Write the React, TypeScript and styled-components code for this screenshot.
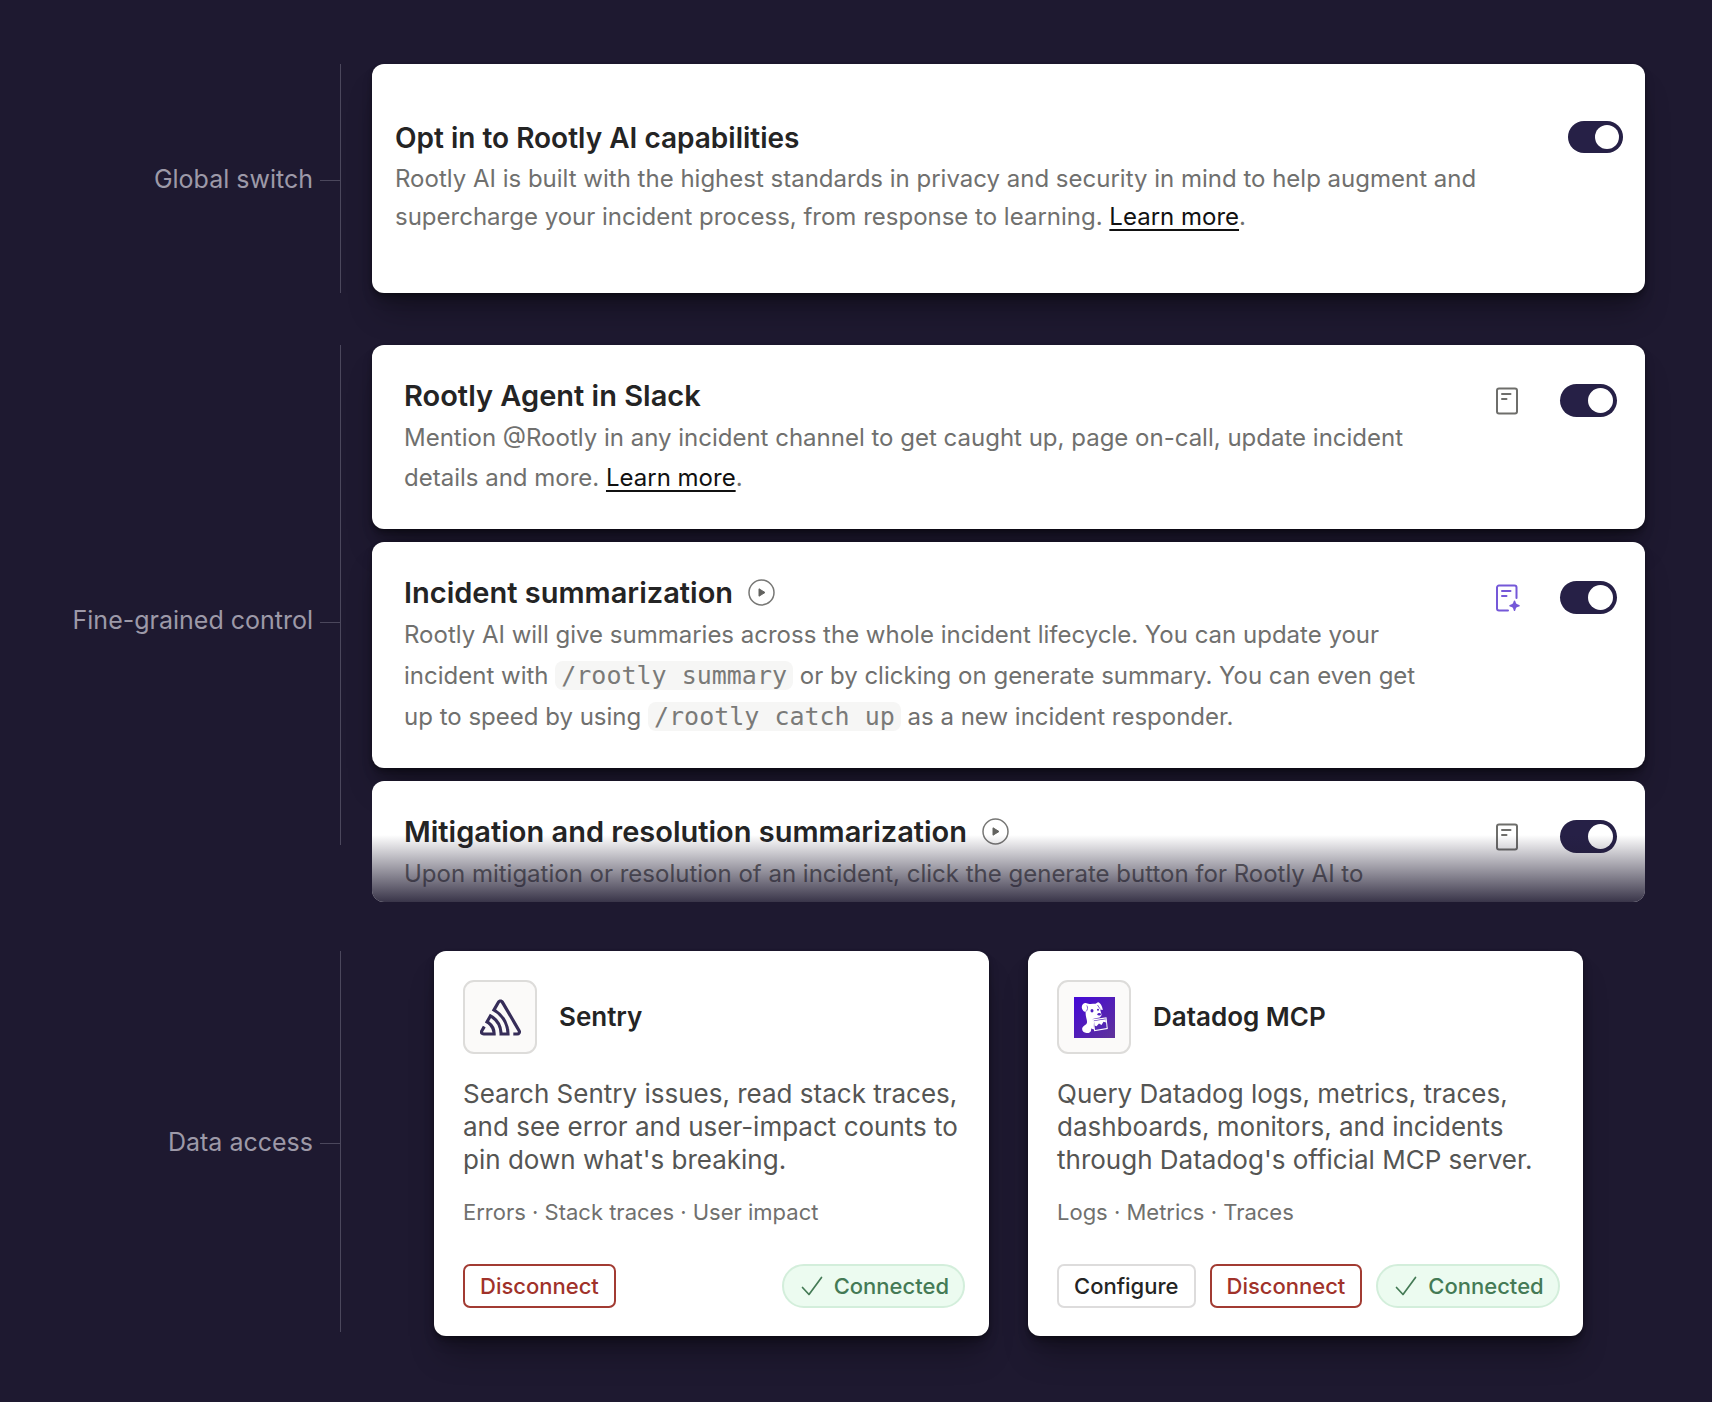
import React from 'react';
import styled, { createGlobalStyle, css } from 'styled-components';
import { SiSentry } from 'react-icons/si';

const GlobalStyle = createGlobalStyle`
  *, *::before, *::after { box-sizing: border-box; }
  body {
    margin: 0;
    background: #1e1930;
    font-family: Inter, 'Liberation Sans', sans-serif;
    color: #242424;
  }
  h2, h3, p { margin: 0; }
  button { font-family: inherit; cursor: pointer; }
`;

const Page = styled.main`
  display: flex;
  flex-direction: column;
  padding: 64px 67px 66px 0;
`;

const Section = styled.section<{ $gap?: number }>`
  display: grid;
  grid-template-columns: 341px minmax(0, 1fr);
  column-gap: 31px;
  margin-bottom: ${(p) => p.$gap ?? 0}px;
`;

const Rail = styled.div<{ $trim?: number; $cut?: number }>`
  display: flex;
  align-items: center;
  justify-content: flex-end;
  margin-bottom: ${(p) => p.$trim ?? 0}px;
  padding-right: 1px;
  background: linear-gradient(#4b475c, #4b475c) right top / 1px calc(100% - ${(p) => p.$cut ?? 0}px) no-repeat;
`;

const RailLabel = styled.h2`
  font-size: 25px;
  line-height: 32px;
  font-weight: 400;
  color: #9d99a8;
  &::after {
    content: '';
    display: inline-block;
    vertical-align: middle;
    width: 20px;
    height: 1px;
    margin-left: 7px;
    background: #4b475c;
  }
`;

const shadow = css`
  box-shadow: 0 2px 4px rgba(0, 0, 0, 0.3), 0 8px 12px -2px rgba(0, 0, 0, 0.25),
    0 24px 32px -8px rgba(0, 0, 0, 0.3);
`;

const Stack = styled.div`
  display: flex;
  flex-direction: column;
  gap: 13px;
`;

const Setting = styled.article<{ $hero?: boolean; $faded?: boolean }>`
  position: relative;
  display: flex;
  align-items: flex-start;
  padding: ${(p) => (p.$hero ? '53px 22px 57px 23px' : p.$faded ? '30px 28px 8px 32px' : '30px 28px 31px 32px')};
  border-radius: 12px;
  background: #fff;
  ${(p) => !p.$faded && shadow}
  ${(p) =>
    p.$faded &&
    css`
      overflow: hidden;
      &::after {
        content: '';
        position: absolute;
        inset: 54px 0 0;
        background: linear-gradient(rgba(30, 25, 48, 0), rgba(30, 25, 48, 0.88));
        pointer-events: none;
      }
    `}
`;

const Copy = styled.div<{ $hero?: boolean }>`
  flex: 1;
  max-width: ${(p) => (p.$hero ? 1090 : 1040)}px;
`;

const TitleRow = styled.div`
  display: flex;
  align-items: center;
  gap: 15px;
  height: 41px;
  margin-bottom: 2px;
`;

const Title = styled.h3<{ $hero?: boolean }>`
  font-size: ${(p) => (p.$hero ? 28 : 29)}px;
  line-height: 40px;
  font-weight: 600;
`;

const Body = styled.p<{ $hero?: boolean }>`
  font-size: 24px;
  line-height: ${(p) => (p.$hero ? 38 : 40)}px;
  color: #70706e;
`;

const TextLink = styled.a`
  color: #111;
  text-decoration: underline;
  text-decoration-thickness: 2px;
  text-underline-offset: 4px;
`;

const Code = styled.code`
  padding: 0 6px;
  border-radius: 8px;
  background: #f6f6f5;
  font-family: 'DejaVu Sans Mono', monospace;
  font-size: 25px;
  line-height: 41px;
  color: #7a7a78;
`;

const Controls = styled.div<{ $hero?: boolean }>`
  display: flex;
  align-items: center;
  gap: 40px;
  margin-left: auto;
  padding-top: ${(p) => (p.$hero ? 4 : 9)}px;
`;

const IconButton = styled.button`
  display: grid;
  place-items: center;
  padding: 0;
  border: 0;
  background: none;
`;

const Toggle = styled.input<{ $hero?: boolean }>`
  appearance: none;
  display: flex;
  align-items: center;
  justify-content: flex-end;
  width: ${(p) => (p.$hero ? 55 : 57)}px;
  height: ${(p) => (p.$hero ? 32 : 33)}px;
  margin: 0;
  padding: 4px;
  border-radius: 17px;
  background: #262046;
  cursor: pointer;
  &::before {
    content: '';
    height: 100%;
    aspect-ratio: 1;
    border-radius: 50%;
    background: #fff;
  }
  &:not(:checked) {
    justify-content: flex-start;
    background: #b9b7c4;
  }
`;

const Integrations = styled.div`
  display: grid;
  grid-template-columns: repeat(2, minmax(0, 1fr));
  gap: 39px;
  padding: 0 62px;
`;

const Card = styled.article`
  display: flex;
  flex-direction: column;
  padding: 29px 24px 28px 29px;
  border-radius: 12px;
  background: #fff;
  ${shadow}
`;

const CardHead = styled.header`
  display: flex;
  align-items: center;
  gap: 22px;
`;

const Logo = styled.div`
  display: grid;
  place-items: center;
  width: 74px;
  height: 74px;
  border: 2px solid #dddcda;
  border-radius: 11px;
  background: #fbfaf9;
  color: #362d59;
`;

const CardTitle = styled.h3`
  font-size: 26px;
  line-height: 32px;
  font-weight: 600;
`;

const CardText = styled.p`
  margin-top: 23px;
  font-size: 26px;
  line-height: 33px;
  color: #555553;
`;

const Meta = styled.p`
  margin-top: 20px;
  font-size: 22px;
  line-height: 32px;
  color: #70706e;
`;

const Actions = styled.footer`
  display: flex;
  align-items: center;
  gap: 14px;
  margin-top: 36px;
`;

const Button = styled.button<{ $danger?: boolean }>`
  height: 44px;
  padding: 0 15px;
  border: 2px solid ${(p) => (p.$danger ? '#a23b32' : '#dddcdc')};
  border-radius: 7px;
  background: #fff;
  font-size: 22px;
  font-weight: 500;
  white-space: nowrap;
  color: ${(p) => (p.$danger ? '#a0322a' : '#242424')};
`;

const Status = styled.span`
  display: flex;
  align-items: center;
  gap: 11px;
  height: 44px;
  margin-left: auto;
  padding: 0 14px 0 17px;
  border: 2px solid #d3eedb;
  border-radius: 22px;
  background: #ecfbf0;
  font-size: 22px;
  font-weight: 500;
  color: #447a55;
`;

const DocIcon = () => (
  <svg width="26" height="28" viewBox="0 0 26 28" fill="none" stroke="#6e6e6b" strokeWidth="2" strokeLinecap="round">
    <rect x="3" y="1.5" width="20" height="25" rx="2" />
    <path d="M8 7h8.5M8 12h4.5" />
  </svg>
);

const DocSparkIcon = () => (
  <svg width="26" height="28" viewBox="0 0 26 28" fill="none" stroke="#7558d8" strokeWidth="2" strokeLinecap="round">
    <path d="M22.500 14V3.500a2 2 0 0 0-2-2H5a2 2 0 0 0-2 2v21a2 2 0 0 0 2 2h9M8 7h8.500M8 12h4.500" />
    <path
      d="M20.500 17.200c.9 3.200 1.300 3.600 4.500 4.500c-3.200.9-3.600 1.300-4.500 4.500c-.9-3.200-1.300-3.600-4.500-4.500c3.200-.9 3.600-1.300 4.500-4.500z"
      fill="#7558d8"
      strokeWidth="1.500"
      strokeLinejoin="round"
    />
  </svg>
);

const PlayIcon = () => (
  <svg width="27" height="27" viewBox="0 0 27 27">
    <circle cx="13.500" cy="13.500" r="12.500" fill="none" stroke="#777775" strokeWidth="1.500" />
    <path d="M11 9.800v7.400l6-3.700z" fill="#62625f" stroke="#62625f" strokeLinejoin="round" />
  </svg>
);

const CheckIcon = () => (
  <svg width="22" height="20" viewBox="0 0 22 20" fill="none" stroke="#447a55" strokeWidth="1.700" strokeLinecap="round" strokeLinejoin="round">
    <path d="M1.500 11.500l6.500 7L20.500 1.500" />
  </svg>
);

const DatadogLogo = () => (
  <svg width="41" height="41" viewBox="0 0 41 41">
    <defs>
      <linearGradient id="datadog-tile" x1="0" y1="0" x2="1" y2="1">
        <stop offset="0" stopColor="#4408d8" />
        <stop offset="1" stopColor="#5f3399" />
      </linearGradient>
    </defs>
    <rect width="41" height="41" fill="url(#datadog-tile)" />
    <g fill="#fff">
      <path d="M12.500 6.200C14.500 7.300 18 6.800 21.500 6.800L24 5.200C26.500 5.800 28.500 9.500 28.800 13L26.200 12.500L27.500 17.500C27.800 19.500 25.500 21 23 21L18.800 22L20.200 32.500L17 31.500C17.800 34.500 15.500 36.200 12.500 36C9.500 35.800 7.500 33.500 8.300 31C9 28.500 12.500 28.300 13 25.500C13.300 22.500 11.500 20.500 11.600 14.800C9.500 14.800 7.800 12.500 7.800 10C7.800 7.500 10 5.500 12.500 6.200Z" />
      <path d="M18.500 22.200L32.500 20.200L33.800 32L20.200 34.200Z" />
    </g>
    <path d="M19.800 23.400L31.600 21.600L32.700 31L21 33Z" fill="#5326b4" />
    <path d="M20 24L31.700 22.200L32 25.500L29.500 24.800L27.500 28L25 26.500L22.500 29.200L20.500 28.500Z" fill="#fff" />
    <path d="M12.800 8.500C14 10 13.800 13 12 14.500M23.500 8L26 11.800" fill="none" stroke="#4f1fc0" strokeWidth=".7" />
    <ellipse cx="18" cy="13.800" rx="1.500" ry="1.800" fill="#4f1fc0" />
    <circle cx="24" cy="12.700" r="1" fill="#4f1fc0" />
    <ellipse cx="25.200" cy="17.200" rx="1.800" ry="1.200" fill="#4f1fc0" />
  </svg>
);

type SettingCardProps = {
  id: string;
  title: string;
  hero?: boolean;
  faded?: boolean;
  play?: boolean;
  doc?: 'plain' | 'spark';
  children: React.ReactNode;
};

function SettingCard({ id, title, hero, faded, play, doc, children }: SettingCardProps) {
  return (
    <Setting $hero={hero} $faded={faded}>
      <Copy $hero={hero}>
        <TitleRow>
          <Title $hero={hero}>
            <label htmlFor={id}>{title}</label>
          </Title>
          {play && (
            <IconButton type="button" aria-label="Play demo">
              <PlayIcon />
            </IconButton>
          )}
        </TitleRow>
        <Body $hero={hero}>{children}</Body>
      </Copy>
      <Controls $hero={hero}>
        {doc && (
          <IconButton type="button" aria-label="Prompt">
            {doc === 'spark' ? <DocSparkIcon /> : <DocIcon />}
          </IconButton>
        )}
        <Toggle $hero={hero} id={id} type="checkbox" role="switch" defaultChecked />
      </Controls>
    </Setting>
  );
}

type IntegrationProps = {
  name: string;
  logo: React.ReactNode;
  text: string;
  meta: string;
  configurable?: boolean;
};

function Integration({ name, logo, text, meta, configurable }: IntegrationProps) {
  return (
    <Card>
      <CardHead>
        <Logo>{logo}</Logo>
        <CardTitle>{name}</CardTitle>
      </CardHead>
      <CardText>{text}</CardText>
      <Meta>{meta}</Meta>
      <Actions>
        {configurable && <Button type="button">Configure</Button>}
        <Button type="button" $danger>
          Disconnect
        </Button>
        <Status>
          <CheckIcon />
          Connected
        </Status>
      </Actions>
    </Card>
  );
}

export default function App() {
  return (
    <>
      <GlobalStyle />
      <Page>
        <Section $gap={52}>
          <Rail>
            <RailLabel>Global switch</RailLabel>
          </Rail>
          <SettingCard id="opt-in" title="Opt in to Rootly AI capabilities" hero>
            Rootly AI is built with the highest standards in privacy and security in mind to help augment and
            supercharge your incident process, from response to learning. <TextLink href="#privacy">Learn more</TextLink>.
          </SettingCard>
        </Section>

        <Section $gap={49}>
          <Rail $trim={7} $cut={50}>
            <RailLabel>Fine-grained control</RailLabel>
          </Rail>
          <Stack>
            <SettingCard id="slack-agent" title="Rootly Agent in Slack" doc="plain">
              Mention @Rootly in any incident channel to get caught up, page on-call, update incident details and
              more. <TextLink href="#slack">Learn more</TextLink>.
            </SettingCard>
            <SettingCard id="incident-summary" title="Incident summarization" play doc="spark">
              Rootly AI will give summaries across the whole incident lifecycle. You can update your incident with{' '}
              <Code>/rootly summary</Code> or by clicking on generate summary. You can even get up to speed by using{' '}
              <Code>/rootly catch up</Code> as a new incident responder.
            </SettingCard>
            <SettingCard id="resolution-summary" title="Mitigation and resolution summarization" play doc="plain" faded>
              Upon mitigation or resolution of an incident, click the generate button for Rootly AI to
            </SettingCard>
          </Stack>
        </Section>

        <Section>
          <Rail $trim={4}>
            <RailLabel>Data access</RailLabel>
          </Rail>
          <Integrations>
            <Integration
              name="Sentry"
              logo={<SiSentry size={41} />}
              text="Search Sentry issues, read stack traces, and see error and user-impact counts to pin down what's breaking."
              meta="Errors · Stack traces · User impact"
            />
            <Integration
              name="Datadog MCP"
              logo={<DatadogLogo />}
              text="Query Datadog logs, metrics, traces, dashboards, monitors, and incidents through Datadog's official MCP server."
              meta="Logs · Metrics · Traces"
              configurable
            />
          </Integrations>
        </Section>
      </Page>
    </>
  );
}
